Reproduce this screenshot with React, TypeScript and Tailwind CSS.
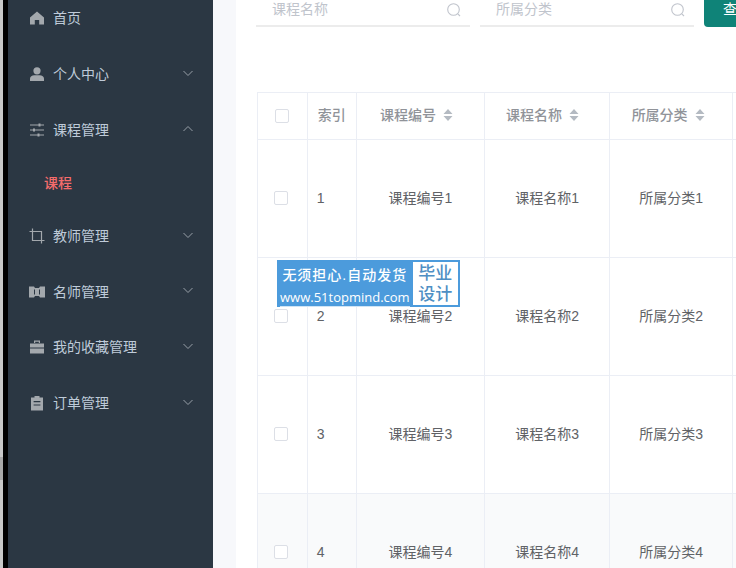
import { ReactNode } from "react";

const cjk = "font-['Liberation_Sans','Noto_Sans_CJK_SC',sans-serif]";

function Chevron({ up }: { up?: boolean }) {
  return (
    <svg width="12" height="12" viewBox="0 0 12 12" fill="none" stroke="#98a0a8" strokeWidth="1" className="mb-[3px]">
      <path d={up ? "M1.5 8 L6 3.5 L10.5 8" : "M1.5 4 L6 8.5 L10.5 4"} />
    </svg>
  );
}

function Icon({ children }: { children: ReactNode }) {
  return (
    <svg width="16" height="16" viewBox="0 0 16 16" fill="#a3a8ad" className="shrink-0">
      {children}
    </svg>
  );
}

const icons: Record<string, ReactNode> = {
  home: (
    <Icon>
      <path d="M8 1.5 L15 7.6 V14.5 H10.2 V10 H5.8 V14.5 H1 V7.6 Z" />
    </Icon>
  ),
  user: (
    <Icon>
      <circle cx="8" cy="4.8" r="3.6" />
      <path d="M1 15 V12.6 C1 10.6 3 9.4 5.2 9.2 H10.8 C13 9.4 15 10.6 15 12.6 V15 Z" />
    </Icon>
  ),
  sliders: (
    <Icon>
      <path d="M1 3 H15 M1 8 H15 M1 13 H15" stroke="#a3a8ad" strokeWidth="1" fill="none" />
      <rect x="9.5" y="1.5" width="2" height="3" />
      <rect x="4" y="6.5" width="2" height="3" />
      <rect x="8.5" y="11.5" width="2" height="3" />
    </Icon>
  ),
  crop: (
    <Icon>
      <path d="M3.5 0.5 V12.5 H15.5 M0.5 3.5 H12.5 V15.5" stroke="#a3a8ad" strokeWidth="1.2" fill="none" />
    </Icon>
  ),
  tickets: (
    <Icon>
      <path d="M0 2.5 H5 L6 4 H10 L11 2.5 H16 V13.5 H11 L10 12 H6 L5 13.5 H0 Z" />
      <rect x="5" y="5.5" width="1" height="5" fill="#2b3743" />
      <rect x="10" y="5.5" width="1" height="5" fill="#2b3743" />
    </Icon>
  ),
  case: (
    <Icon>
      <path d="M5 4 V1.6 H11 V4 H9.8 V2.8 H6.2 V4 Z" />
      <path d="M1 4.4 H15 V8.4 H1 Z M1 9.4 H15 V14.6 H1 Z" />
    </Icon>
  ),
  clipboard: (
    <Icon>
      <path fillRule="evenodd" d="M5.5 1 H10.5 V2.4 H14 V15.4 H2 V2.4 H5.5 Z M4.6 6 V7.2 H11.4 V6 Z M4.6 9.4 V10.6 H11.4 V9.4 Z" />
    </Icon>
  ),
};

const menu = [
  { label: "首页", icon: "home", h: "h-[56px]" },
  { label: "个人中心", icon: "user", arrow: "down", h: "h-[56px]" },
  { label: "课程管理", icon: "sliders", arrow: "up", h: "h-[56px]" },
  { label: "课程", sub: true, h: "h-[50px]" },
  { label: "教师管理", icon: "crop", arrow: "down", h: "h-[56px]" },
  { label: "名师管理", icon: "tickets", arrow: "down", h: "h-[55px]" },
  { label: "我的收藏管理", icon: "case", arrow: "down", h: "h-[56px]" },
  { label: "订单管理", icon: "clipboard", arrow: "down", h: "h-[56px]" },
];

const cols = ["w-[50px]", "w-[49px]", "w-[129px]", "w-[125px]", "w-[124px]", "w-[124px]"];

function SortIcon() {
  return (
    <svg width="10" height="14" viewBox="0 0 10 14" fill="#b4bac2" className="ml-[7px] shrink-0">
      <path d="M5 1 L9.5 6 H0.5 Z M5 13 L0.5 8 H9.5 Z" />
    </svg>
  );
}

function SearchInput({ placeholder }: { placeholder: string }) {
  return (
    <div className="flex h-[27px] w-[214px] shrink-0 items-start justify-between border-b-2 border-[#ececec] pl-4 pr-[8px]">
      <span className="-mt-[1px] text-sm leading-[20px] text-[#c0c4cc]">{placeholder}</span>
      <svg width="16" height="16" viewBox="0 0 16 16" fill="none" stroke="#c0c4cc" strokeWidth="1.1" className="mt-[2px]">
        <circle cx="7.5" cy="7.5" r="5.8" />
        <path d="M11.8 11.8 L14 14" />
      </svg>
    </div>
  );
}

function Checkbox() {
  return <div className="h-[14px] w-[14px] rounded-[2px] border border-[#dcdfe6] bg-white" />;
}

function Row({ n, last }: { n: number; last?: boolean }) {
  const cell = "flex items-center border-r border-[#ebeef5] pb-[2px] text-sm text-[#606266]";
  return (
    <div className={`flex h-[118px] shrink-0 border-b border-[#ebeef5] ${n === 4 ? "bg-[#f9fafb]" : "bg-white"} ${last ? "border-b-0" : ""}`}>
      <div className={`${cell} ${cols[0]} justify-center pr-[3px]`}>
        <Checkbox />
      </div>
      <div className={`${cell} ${cols[1]} pl-[9px]`}>{n}</div>
      <div className={`${cell} ${cols[2]} justify-center`}>课程编号{n}</div>
      <div className={`${cell} ${cols[3]} justify-center`}>课程名称{n}</div>
      <div className={`${cell} ${cols[4]} justify-center`}>所属分类{n}</div>
      <div className={`${cell} ${cols[5]}`} />
    </div>
  );
}

export default function App() {
  return (
    <div className={`relative flex h-[568px] w-[736px] overflow-hidden bg-white ${cjk}`}>
      <div className="w-[3px] shrink-0 bg-[#c8c8c8] pt-[457px]">
        <div className="h-[23px] bg-[#a8a8a8]" />
      </div>
      <div className="w-[5px] shrink-0 bg-black" />

      {/* sidebar */}
      <aside className="w-[205px] shrink-0 bg-[#2b3743] pt-0">
        <div className="-mt-[10px]">
          {menu.map((m) =>
            m.sub ? (
              <div key={m.label} className={`flex ${m.h} items-center pl-9 text-sm font-medium text-[#f56c6c]`}>
                {m.label}
              </div>
            ) : (
              <div key={m.label} className={`flex ${m.h} items-center pl-[21px] pr-[19px] text-sm text-[#bfcbd9]`}>
                {icons[m.icon as string]}
                <span className="ml-[8px] flex-1">{m.label}</span>
                {m.arrow && <Chevron up={m.arrow === "up"} />}
              </div>
            )
          )}
        </div>
      </aside>

      <div className="w-[23px] shrink-0 bg-[#f7f8fb]" />

      {/* main */}
      <main className="min-w-0 flex-1 pl-[20px]">
        <div className="flex gap-[10px]">
          <SearchInput placeholder="课程名称" />
          <SearchInput placeholder="所属分类" />
          <div className="h-[27px] w-[60px] shrink-0 rounded-b-[4px] bg-[#0f8378] pl-[19px] text-sm leading-[18px] text-white">
            查询
          </div>
        </div>

        <div className="ml-[1px] mt-[65px] flex h-[476px] w-[600px] flex-col border-l border-t border-[#ebeef5]">
          <div className="flex h-[47px] shrink-0 border-b border-[#ebeef5] text-sm font-medium text-[#909399]">
            <div className={`flex items-center justify-center border-r border-[#ebeef5] ${cols[0]}`}>
              <Checkbox />
            </div>
            <div className={`flex items-center justify-center border-r border-[#ebeef5] pb-[2px] ${cols[1]}`}>索引</div>
            <div className={`flex items-center justify-center border-r border-[#ebeef5] pb-[2px] pr-[8px] ${cols[2]}`}>
              课程编号
              <SortIcon />
            </div>
            <div className={`flex items-center justify-center border-r border-[#ebeef5] pb-[2px] pr-[9px] ${cols[3]}`}>
              课程名称
              <SortIcon />
            </div>
            <div className={`flex items-center justify-center border-r border-[#ebeef5] pb-[2px] pr-[6px] ${cols[4]}`}>
              所属分类
              <SortIcon />
            </div>
            <div className={`border-r border-[#ebeef5] ${cols[5]}`} />
          </div>
          <Row n={1} />
          <Row n={2} />
          <Row n={3} />
          <Row n={4} last />
        </div>
      </main>

      {/* watermark badge */}
      <div className="absolute left-[277px] top-[260px] flex h-[47px] w-[183px] bg-[#4c9bdc] p-[2px] pl-[3px]">
        <div className="flex-1 text-center text-white">
          <div className="text-sm font-medium leading-[27px] tracking-[1px]">无须担心.自动发货</div>
          <div className="border-b border-[#cfe4f5] font-['Open_Sans',sans-serif] text-[13px] font-medium leading-[17px]">www.51topmind.com</div>
        </div>
        <div className="ml-[3px] flex w-[46px] flex-col items-center justify-center bg-white text-[17px] font-medium leading-[21px] text-[#4f8fc4]">
          <span>毕业</span>
          <span>设计</span>
        </div>
      </div>
    </div>
  );
}
